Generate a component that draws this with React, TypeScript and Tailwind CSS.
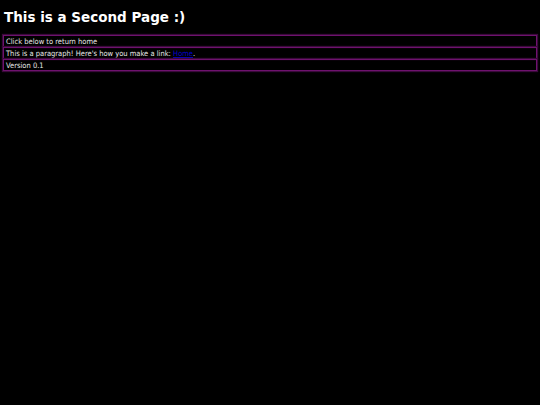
export default function App() {
  const rows = [
    <>Click below to return home</>,
    <>
      This is a paragraph! Here&apos;s how you make a link:{' '}
      <a href="#" className="text-[#0000cc] underline">
        Home
      </a>
      .
    </>,
    <>Version 0.1</>,
  ];

  return (
    <div
      className="min-h-screen bg-black text-white px-[3px]"
      style={{ fontFamily: '"DejaVu Sans", sans-serif' }}
    >
      <h1 className="text-[13.5px] font-bold pt-[9px] pb-[10px] pl-[1px] leading-[16px]">
        This is a Second Page :)
      </h1>
      <div className="flex flex-col">
        {rows.map((row, i) => (
          <div
            key={i}
            className="border border-[#6e126e] shadow-[0_0_1px_1px_#3a0a3a] px-[2px] pt-[1px] text-[7.5px] leading-[9px] text-[#e8e8e8]"
            style={{ fontFamily: '"DejaVu Sans Condensed", "DejaVu Sans", sans-serif', fontStretch: 'condensed' }}
          >
            {row}
          </div>
        ))}
      </div>
    </div>
  );
}
